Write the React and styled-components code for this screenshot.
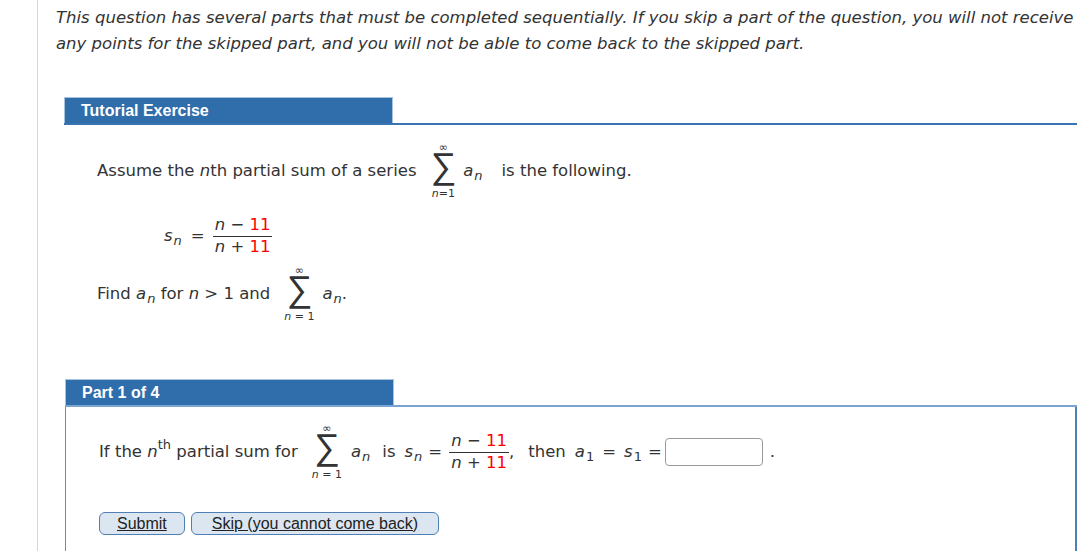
import React from 'react'
import styled, { createGlobalStyle } from 'styled-components'

const GlobalStyle = createGlobalStyle`
  html, body {
    margin: 0;
    overflow: hidden;
    background: #fff;
  }
  body {
    font-family: "DejaVu Sans", Verdana, sans-serif;
    color: #333;
  }
`

const Frame = styled.div`
  margin-left: 37px;
  border-left: 1px solid #d6d6d6;
  padding: 5px 14px 0 18px;
  height: 551px;
  box-sizing: border-box;
`

const Intro = styled.p`
  margin: 0;
  font-size: 16.5px;
  font-style: italic;
  line-height: 26px;
  white-space: nowrap;
`

const Section = styled.section`
  margin: ${p => p.$top}px 0 0 ${p => p.$left}px;
`

const HeadBar = styled.div`
  display: flex;
  border-bottom: 2px solid ${p => p.$line};
`

const Tab = styled.div`
  width: 329px;
  height: 26px;
  box-sizing: border-box;
  padding-left: 16px;
  background: #2f6dab;
  border: 1px solid #a8c3e0;
  border-bottom: none;
  color: #fff;
  font: bold 16px/25px "Liberation Sans", Arial, sans-serif;
`

const Body = styled.div`
  padding: ${p => p.$pad};
  font-size: 16.5px;
  line-height: 20px;
`

const PartBox = styled(Body)`
  border-left: 1px solid #5f8dbd;
  border-right: 2px solid #4f7fb5;
  min-height: 200px;
`

const Line = styled.div`
  display: flex;
  align-items: center;
  white-space: nowrap;
  margin: ${p => p.$m || 0};
`

const V = styled.i`
  font-style: italic;
`

const Sub = styled.span`
  font-size: 13px;
  font-style: ${p => (p.$upright ? 'normal' : 'italic')};
  position: relative;
  top: 5px;
  margin-left: 1px;
`

const Sup = styled.span`
  font-size: 13px;
  position: relative;
  top: -7px;
`

const Red = styled.span`
  color: #f00;
`

const Gap = styled.span`
  display: inline-block;
  width: ${p => p.$w}px;
`

const Sum = styled.span`
  display: inline-flex;
  flex-direction: column;
  align-items: center;
  margin: ${p => p.$m};
`

const Limit = styled.span`
  height: 12px;
  font-size: 11px;
  line-height: 12px;
  white-space: pre;
  margin-top: ${p => p.$mt || 0}px;
`

const Sigma = styled.span`
  display: block;
  position: relative;
  top: -2px;
  height: 24px;
  margin-top: 2px;
  font-family: "DejaVu Sans", sans-serif;
  font-size: 36px;
  font-weight: 200;
  line-height: 24px;
`

const Frac = styled.span`
  display: inline-flex;
  flex-direction: column;
  align-items: stretch;
  text-align: center;
  margin: ${p => p.$m || 0};
`

const Num = styled.span`
  padding: 0 2px 1px;
  border-bottom: 1px solid #333;
  line-height: 20px;
`

const Den = styled.span`
  line-height: 20px;
`

const Answer = styled.span`
  display: inline-block;
  width: 98px;
  height: 28px;
  box-sizing: border-box;
  border: 1px solid #9a9a9a;
  border-radius: 4px;
  margin: 0 7px 0 3px;
`

const Buttons = styled.div`
  display: flex;
  gap: 6px;
  margin-top: 31px;
`

const Btn = styled.button`
  height: 23px;
  padding: 0 ${p => p.$pad}px;
  box-sizing: border-box;
  background: #dbe6f1;
  border: 1px solid #4f7fb5;
  border-radius: 6px;
  color: #222;
  font: 16px/20px "Liberation Sans", Arial, sans-serif;
  text-decoration: underline;
`

const SumBlock = ({ lower, m }) => (
  <Sum $m={m}>
    <Limit>∞</Limit>
    <Sigma>∑</Sigma>
    <Limit $mt={8}>
      <V>n</V>
      {lower}
    </Limit>
  </Sum>
)

const Fraction = ({ m }) => (
  <Frac $m={m}>
    <Num>
      <V>n</V> − <Red>11</Red>
    </Num>
    <Den>
      <V>n</V> + <Red>11</Red>
    </Den>
  </Frac>
)

export default function App() {
  return (
    <>
      <GlobalStyle />
      <Frame>
        <Intro>
          This question has several parts that must be completed sequentially. If you skip a part of the question, you will not receive
          <br />
          any points for the skipped part, and you will not be able to come back to the skipped part.
        </Intro>

        <Section $top={40} $left={8}>
          <HeadBar $line="#3a74b0">
            <Tab>Tutorial Exercise</Tab>
          </HeadBar>
          <Body $pad="17px 0 0 33px">
            <Line>
              Assume the&nbsp;<V>n</V>th partial sum of a series
              <SumBlock lower="=1" m="0 7px 0 14px" />
              <V>a</V>
              <Sub>n</Sub>
              <Gap $w={19} />
              is the following.
            </Line>
            <Line $m="15px 0 0 67px">
              <V>s</V>
              <Sub>n</Sub>
              <Gap $w={9} />=
              <Fraction m="0 0 0 8px" />
            </Line>
            <Line $m="8px 0 0">
              Find&nbsp;<V>a</V>
              <Sub>n</Sub>&nbsp;for&nbsp;<V>n</V>&nbsp;&gt; 1 and
              <SumBlock lower=" = 1" m="0 8px 0 14px" />
              <V>a</V>
              <Sub>n</Sub>.
            </Line>
          </Body>
        </Section>

        <Section $top={56} $left={9}>
          <HeadBar $line="#7aa5d2">
            <Tab>Part 1 of 4</Tab>
          </HeadBar>
          <PartBox $pad="16px 0 0 33px">
            <Line>
              If the&nbsp;<V>n</V>
              <Sup>th</Sup>&nbsp;partial sum for
              <SumBlock lower=" = 1" m="0 9px 0 14px" />
              <V>a</V>
              <Sub>n</Sub>
              <Gap $w={12} />
              is
              <Gap $w={9} />
              <V>s</V>
              <Sub>n</Sub>
              <Gap $w={6} />=
              <Fraction m="0 0 0 7px" />
              ,<Gap $w={14} />
              then
              <Gap $w={9} />
              <V>a</V>
              <Sub $upright>1</Sub>
              <Gap $w={8} />=<Gap $w={8} />
              <V>s</V>
              <Sub $upright>1</Sub>
              <Gap $w={6} />=
              <Answer />.
            </Line>
            <Buttons>
              <Btn $pad={17}>Submit</Btn>
              <Btn $pad={20}>Skip (you cannot come back)</Btn>
            </Buttons>
          </PartBox>
        </Section>
      </Frame>
    </>
  )
}
